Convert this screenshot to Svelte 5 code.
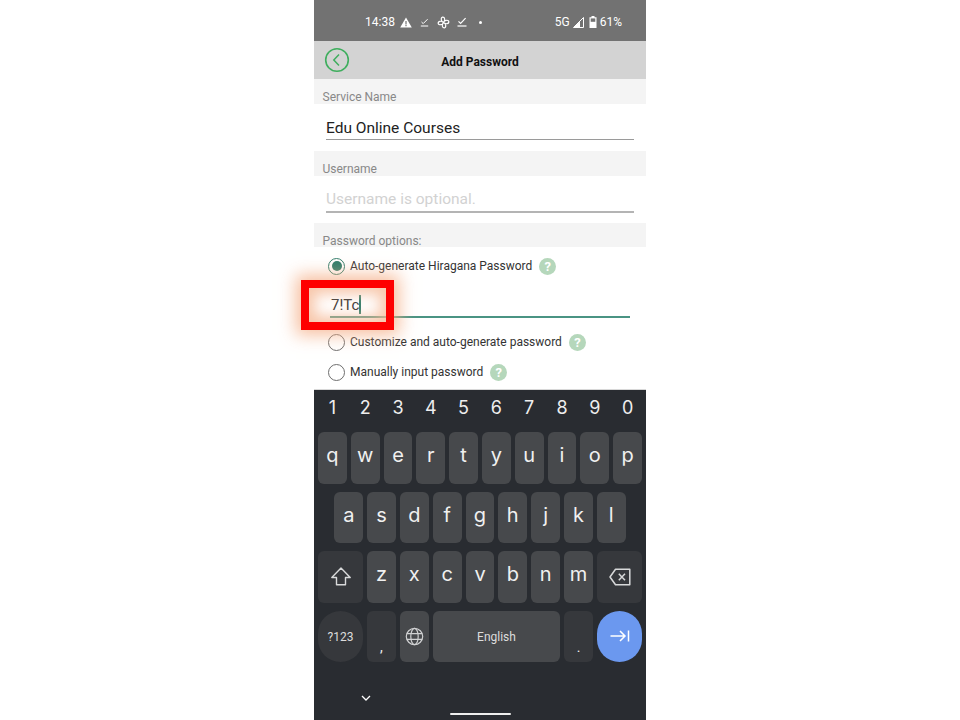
<script>
	const row1 = ['q', 'w', 'e', 'r', 't', 'y', 'u', 'i', 'o', 'p'];
	const row2 = ['a', 's', 'd', 'f', 'g', 'h', 'j', 'k', 'l'];
	const row3 = ['z', 'x', 'c', 'v', 'b', 'n', 'm'];
	const digits = ['1', '2', '3', '4', '5', '6', '7', '8', '9', '0'];
</script>

<div class="stage">
	<div class="phone">
		<div class="status">
			<div class="status-left">
				<span>14:38</span>
				<svg class="warn" width="12" height="11" viewBox="0 0 12 11"><path d="M6 .5 11.800 10.500H.2Z" fill="#fff" /><path d="M5.400 4h1.200v3.400H5.400zM5.400 8h1.200v1.200H5.400z" fill="#727272" /></svg>
				<svg class="check1" width="9" height="9" viewBox="0 0 9 9" fill="none" stroke="#fff"><path d="M1.500 4 3.200 5.600 7.600 1.200" /><path d="M.8 8h7.400" /></svg>
				<svg class="fan" width="13" height="13" viewBox="0 0 13 13" fill="none" stroke="#fff" stroke-width="1.200"><path d="M6.500 6.500C4 6 3.500 1.500 5.500 1.200 8 .9 8.500 4.500 6.500 6.500ZM6.500 6.500C7 4 11.500 3.500 11.800 5.500 12.100 8 8.500 8.500 6.500 6.500ZM6.500 6.500C9 7 9.500 11.500 7.500 11.800 5 12.100 4.500 8.500 6.500 6.500ZM6.500 6.500C6 9 1.500 9.500 1.200 7.500 .9 5 4.500 4.500 6.500 6.500Z" /></svg>
				<svg class="check2" width="10" height="10" viewBox="0 0 10 10" fill="none" stroke="#fff" stroke-width="1.200"><path d="M1.500 4.400 3.600 6.400 8.600 1.200" /><path d="M.5 9h9" /></svg>
				<i class="dot"></i>
			</div>
			<div class="status-right">
				<span>5G</span>
				<svg class="signal" width="11" height="11" viewBox="0 0 11 11"><path d="M10.500.5V10.500H.5Z" fill="none" stroke="#fff" /><path d="M7 4.500V10.500H.5Z" fill="#fff" /></svg>
				<svg class="batt" width="8" height="12" viewBox="0 0 8 12"><path d="M2.500 0h3v1.200H7.500V12H.5V1.200h2Z" fill="#fff" /><path d="M1.700 2.400h4.600v3.400H1.700z" fill="#727272" /></svg>
				<span class="pct">61%</span>
			</div>
		</div>

		<header class="appbar">
			<svg class="back" width="26" height="26" viewBox="0 0 26 26" fill="none" stroke="#3fae5e">
				<circle cx="13" cy="13" r="11.300" stroke-width="1.600" />
				<path d="M15 7.500 9.800 13 15 18.500" stroke-width="1.500" />
			</svg>
			<h1>Add Password</h1>
		</header>

		<div class="label">Service Name</div>
		<div class="field">
			<div class="input">Edu Online Courses</div>
		</div>
		<div class="label">Username</div>
		<div class="field">
			<div class="input placeholder">Username is optional.</div>
		</div>
		<div class="label short">Password options:</div>

		<div class="options">
			<div class="option first">
				<span class="radio on"><i></i></span>
				<span>Auto-generate Hiragana Password</span>
				<span class="help">?</span>
			</div>
			<div class="password"><span>7!Tc</span><i class="caret"></i></div>
			<div class="option second">
				<span class="radio"></span>
				<span>Customize and auto-generate password</span>
				<span class="help">?</span>
			</div>
			<div class="option third">
				<span class="radio"></span>
				<span>Manually input password</span>
				<span class="help">?</span>
			</div>
		</div>

		<div class="keyboard">
			<div class="digits">
				{#each digits as d}
					<span>{d}</span>
				{/each}
			</div>
			<div class="row">
				{#each row1 as k}
					<div class="key letter">{k}</div>
				{/each}
			</div>
			<div class="row inset">
				{#each row2 as k}
					<div class="key letter">{k}</div>
				{/each}
			</div>
			<div class="row">
				<div class="key wide dim">
					<svg width="20" height="19" viewBox="0 0 20 19" fill="none" stroke="#d8d9da" stroke-width="1.400"><path d="M10 1 19.200 10.500H14.500V17.800H5.500V10.500H.8Z" stroke-linejoin="round" /></svg>
				</div>
				{#each row3 as k}
					<div class="key letter">{k}</div>
				{/each}
				<div class="key wide dim">
					<svg width="22" height="18" viewBox="0 0 22 18" fill="none" stroke="#d8d9da" stroke-width="1.500"><path d="M6.500 1.200H20.800V16.800H6.500L1 9Z" stroke-linejoin="round" /><path d="M9.800 5.800 16 12.200M16 5.800 9.800 12.200" /></svg>
				</div>
			</div>
			<div class="row">
				<div class="key wide dim pill small">?123</div>
				<div class="key dim mark">,</div>
				<div class="key">
					<svg width="19" height="19" viewBox="0 0 19 19" fill="none" stroke="#d0d1d2" stroke-width="1.200"><circle cx="9.500" cy="9.500" r="8.200" /><ellipse cx="9.500" cy="9.500" rx="3.700" ry="8.200" /><path d="M1.800 6.700H17.200M1.800 12.300H17.200" /></svg>
				</div>
				<div class="key space small">English</div>
				<div class="key dim mark">.</div>
				<div class="key wide pill enter">
					<svg width="20" height="12" viewBox="0 0 20 12" fill="none" stroke="#fff" stroke-width="1.500"><path d="M.5 6H15M10 1 15 6 10 11" /><path d="M18.500 .5V11.500" /></svg>
				</div>
			</div>
			<div class="navbar">
				<svg class="chev" width="10" height="6" viewBox="0 0 10 6" fill="none" stroke="#fff" stroke-width="1.300"><path d="M1 1 5 5 9 1" /></svg>
				<i class="home"></i>
			</div>
		</div>

		<div class="highlight"></div>
	</div>
</div>

<style>
	:global(body) {
		margin: 0;
		background: #fff;
	}

	.stage {
		display: flex;
		justify-content: center;
		width: 960px;
		height: 720px;
		overflow: hidden;
	}

	.phone {
		position: relative;
		display: flex;
		flex-direction: column;
		width: 332px;
		height: 720px;
		font-family: Roboto, 'Liberation Sans', sans-serif;
		background: #fff;
	}

	.status {
		display: flex;
		justify-content: space-between;
		align-items: center;
		height: 41px;
		padding: 3px 24px 0 51px;
		box-sizing: border-box;
		background: #727272;
		color: #fff;
		font-size: 12px;
		flex: none;
	}

	.status-left,
	.status-right {
		display: flex;
		align-items: center;
	}

	.warn {
		margin-left: 5px;
	}

	.check1 {
		margin-left: 8px;
	}

	.fan {
		margin-left: 8px;
	}

	.check2 {
		margin-left: 7px;
	}

	.dot {
		width: 3px;
		height: 3px;
		margin-left: 12px;
		border-radius: 50%;
		background: #fff;
	}

	.signal {
		margin-left: 3px;
	}

	.batt {
		margin-left: 5px;
	}

	.pct {
		margin-left: 3px;
	}

	.appbar {
		position: relative;
		display: flex;
		align-items: center;
		justify-content: center;
		height: 38px;
		padding-top: 3px;
		box-sizing: border-box;
		background: #d3d3d3;
		flex: none;
	}

	.back {
		position: absolute;
		left: 10px;
		top: 6px;
	}

	h1 {
		margin: 0;
		font-size: 12px;
		font-weight: 700;
		color: #111;
	}

	.label {
		height: 25px;
		padding: 11px 0 0 8.500px;
		box-sizing: border-box;
		background: #f4f4f4;
		color: #888;
		font-size: 12px;
		line-height: 14px;
		flex: none;
	}

	.label.short {
		height: 24px;
	}

	.field {
		height: 47px;
		padding: 14px 12px 0;
		box-sizing: border-box;
		background: #fff;
		flex: none;
	}

	.input {
		height: 21px;
		border-bottom: 1px solid #9a9a9a;
		color: #222;
		font-size: 15.500px;
		line-height: 20px;
	}

	.placeholder {
		border-bottom: 2px solid #b4b4b4;
		color: #d2d2d2;
		line-height: 19px;
	}

	.options {
		height: 143px;
		padding: 0 0 0 14px;
		box-sizing: border-box;
		background: #fff;
		border-bottom: 1px solid #d8d8d8;
		flex: none;
	}

	.option {
		display: flex;
		align-items: center;
		gap: 5px;
		height: 20px;
		color: #333;
		font-size: 12px;
	}

	.option .help {
		margin-left: 2px;
	}

	.first {
		margin-top: 9px;
	}

	.second {
		margin-top: 14px;
	}

	.third {
		margin-top: 10px;
	}

	.radio {
		display: flex;
		align-items: center;
		justify-content: center;
		width: 17px;
		height: 17px;
		box-sizing: border-box;
		border: 1.500px solid #6e6e6e;
		border-radius: 50%;
		flex: none;
	}

	.radio.on {
		border-color: #2f7d6b;
	}

	.radio.on i {
		width: 10px;
		height: 10px;
		border-radius: 50%;
		background: #2f7d6b;
	}

	.help {
		display: flex;
		align-items: center;
		justify-content: center;
		width: 17px;
		height: 17px;
		border-radius: 50%;
		background: #b5d7bb;
		color: #fff;
		font-size: 13px;
		font-weight: 700;
	}

	.password {
		display: flex;
		align-items: flex-end;
		height: 42px;
		margin: 0 16px 0 2px;
		padding-left: 1px;
		border-bottom: 2px solid #4a9483;
		color: #333;
		font-size: 15px;
		line-height: 22px;
		box-sizing: border-box;
	}

	.caret {
		width: 1.500px;
		height: 19px;
		margin-bottom: 2px;
		background: #2f7d6b;
	}

	.keyboard {
		flex: 1;
		display: flex;
		flex-direction: column;
		gap: 8px;
		padding: 0 4px;
		background: #292c31;
	}

	.digits {
		display: flex;
		gap: 4px;
		height: 34px;
		color: #eee;
		font-family: Inter, Roboto, sans-serif;
		font-size: 18px;
		line-height: 36px;
	}

	.digits span {
		flex: 1 1 0;
		text-align: center;
	}

	.row {
		display: flex;
		gap: 4px;
		height: 51.500px;
		flex: none;
	}

	.inset {
		padding: 0 16.400px;
	}

	.key {
		flex: 1 1 0;
		display: flex;
		align-items: center;
		justify-content: center;
		border-radius: 6px;
		background: #47494c;
		color: #f0f0f0;
		font-size: 20px;
	}

	.letter {
		padding-bottom: 5px;
		box-sizing: border-box;
		font-family: Inter, Roboto, sans-serif;
		font-size: 20px;
	}

	.wide {
		flex: 0 0 45px;
	}

	.dim {
		background: #36383c;
	}

	.pill {
		border-radius: 26px;
	}

	.small {
		padding-top: 2px;
		box-sizing: border-box;
		color: #ddd;
		font-size: 12px;
	}

	.mark {
		align-items: flex-end;
		padding-bottom: 8px;
		box-sizing: border-box;
		font-size: 14px;
		line-height: 14px;
	}

	.space {
		flex: 0 0 127px;
	}

	.enter {
		background: #6b98ef;
	}

	.navbar {
		position: relative;
		flex: 1;
	}

	.chev {
		position: absolute;
		left: 43px;
		top: 25px;
	}

	.home {
		position: absolute;
		left: 132px;
		top: 43px;
		width: 61px;
		height: 2px;
		border-radius: 1px;
		background: #eee;
	}

	.highlight {
		position: absolute;
		left: -13px;
		top: 280px;
		width: 93px;
		height: 50px;
		box-sizing: border-box;
		border: 8px solid #fe0000;
		box-shadow: 0 0 16px 5px rgba(245, 175, 135, 0.8), inset 0 0 14px 6px rgba(245, 185, 150, 0.8);
		pointer-events: none;
	}
</style>
